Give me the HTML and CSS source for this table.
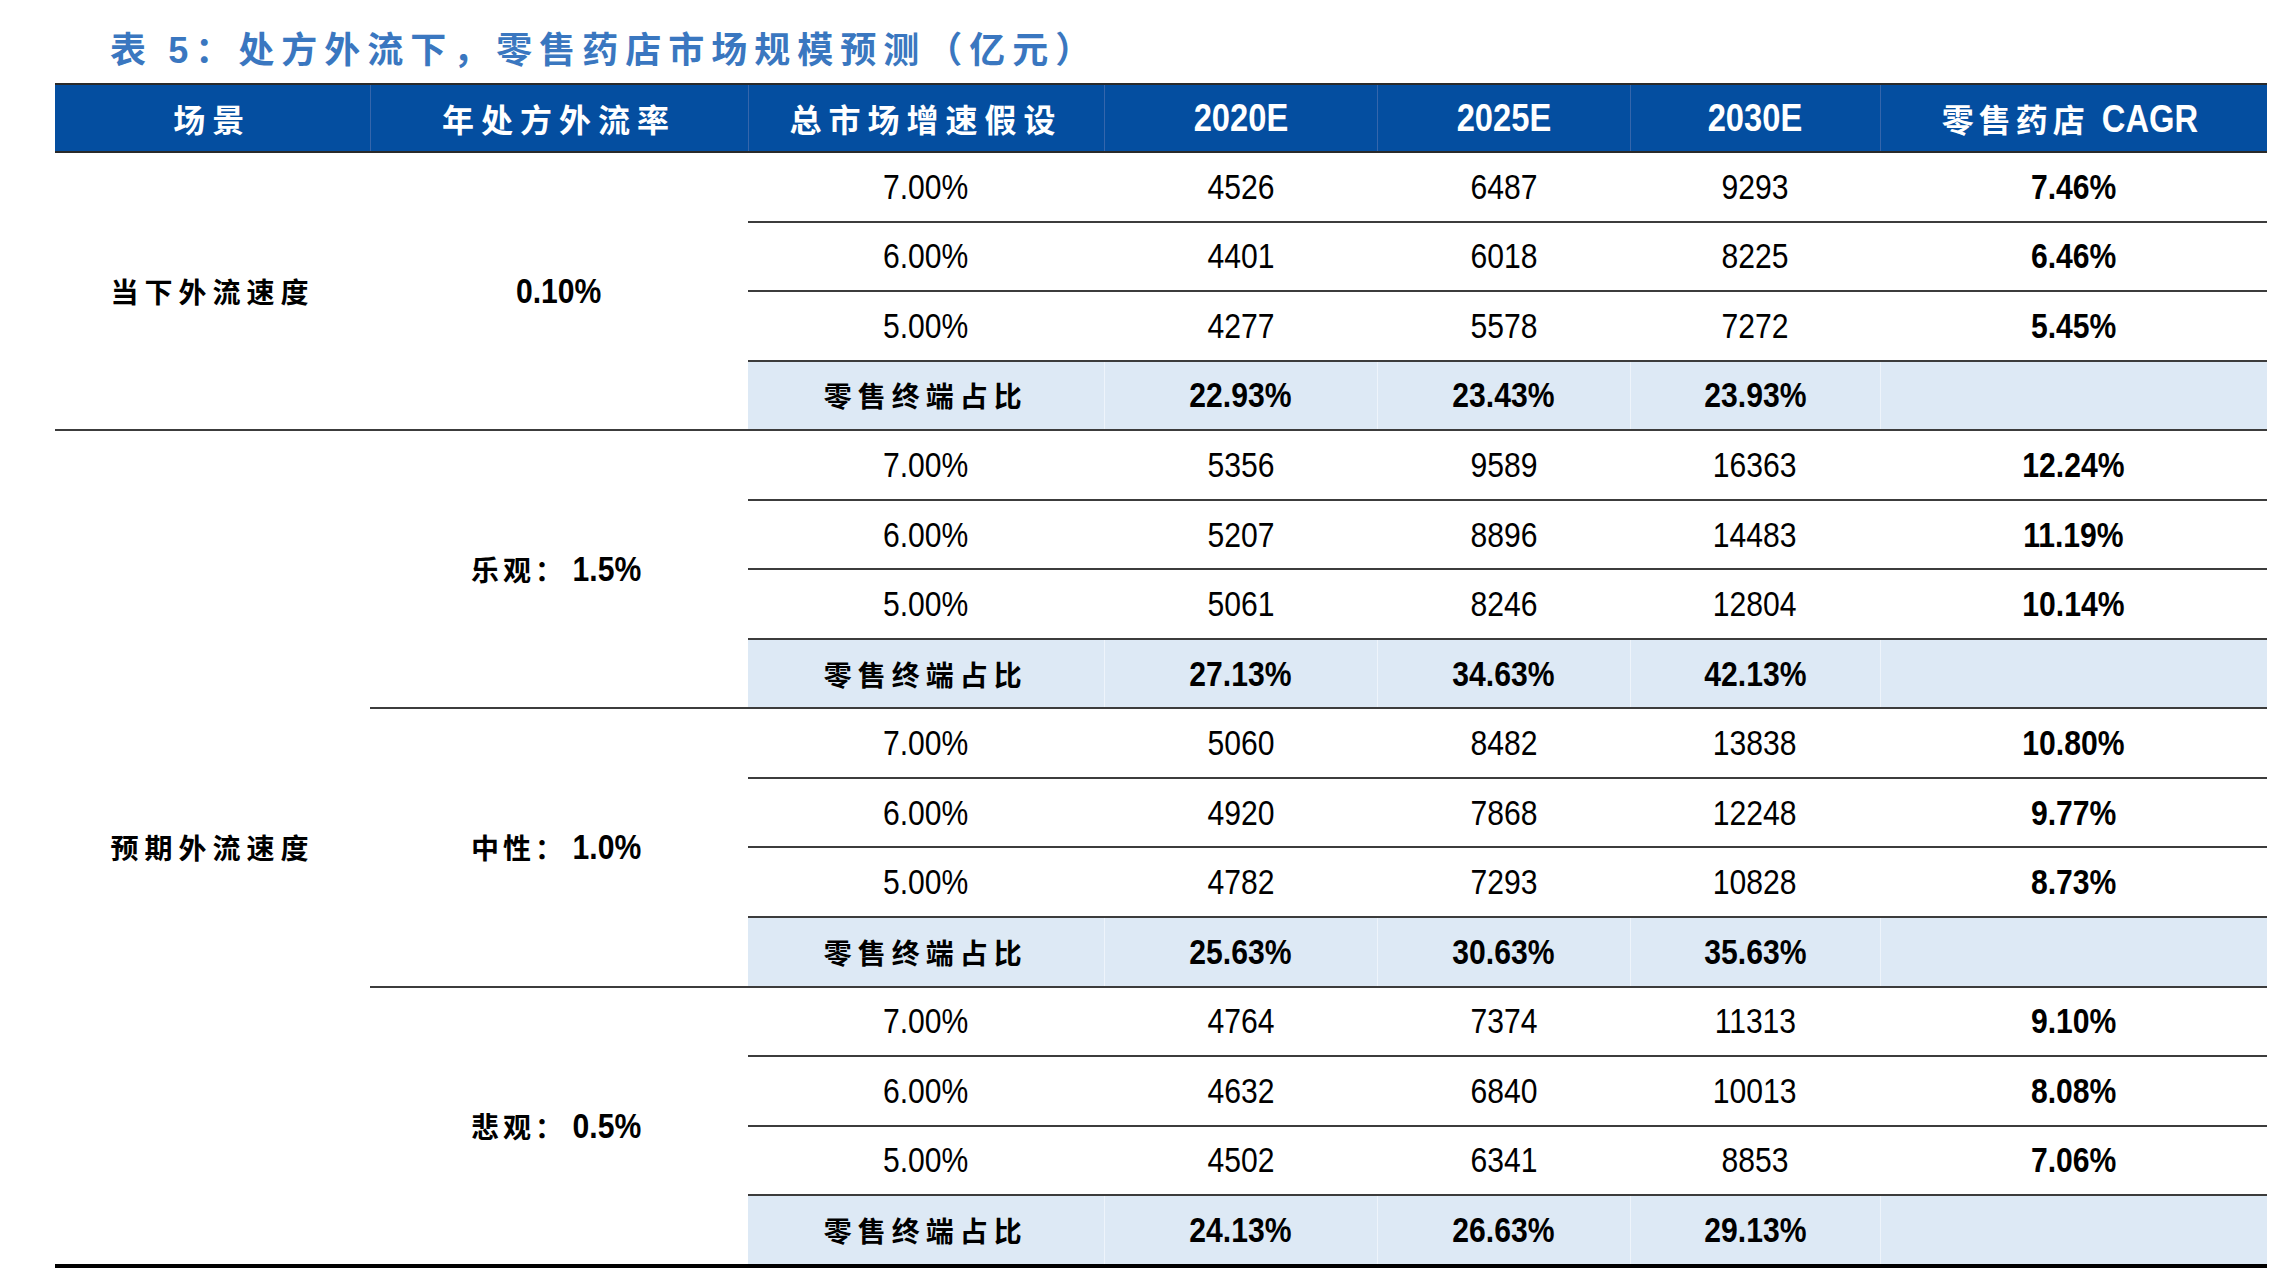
FILE: index.html
```html
<!DOCTYPE html>
<html lang="zh-CN">
<head>
<meta charset="utf-8">
<title>表5</title>
<link rel="stylesheet" href="styles.css">
</head>
<body>
<div class="title">表 <span class="tnum">5</span>：处方外流下，零售药店市场规模预测（亿元）</div>
<table class="tbl">
<colgroup>
<col class="c1"><col class="c2"><col class="c3"><col class="c4"><col class="c5"><col class="c6"><col class="c7">
</colgroup>
<thead>
<tr><th class="cjk">场景</th><th class="cjk">年处方外流率</th><th class="cjk">总市场增速假设</th><th><span class="d">2020E</span></th><th><span class="d">2025E</span></th><th><span class="d">2030E</span></th><th><span class="cjk tight">零售药店</span><span class="d">CAGR</span></th></tr>
</thead>
<tbody>
<tr><td rowspan="4" class="side cjk gend">当下外流速度</td><td rowspan="4" class="side b gend"><span class="d">0.10%</span></td><td><span class="d">7.00%</span></td><td><span class="d">4526</span></td><td><span class="d">6487</span></td><td><span class="d">9293</span></td><td class="b"><span class="d">7.46%</span></td></tr>
<tr><td><span class="d">6.00%</span></td><td><span class="d">4401</span></td><td><span class="d">6018</span></td><td><span class="d">8225</span></td><td class="b"><span class="d">6.46%</span></td></tr>
<tr><td><span class="d">5.00%</span></td><td><span class="d">4277</span></td><td><span class="d">5578</span></td><td><span class="d">7272</span></td><td class="b"><span class="d">5.45%</span></td></tr>
<tr class="hl"><td class="cjk">零售终端占比</td><td class="b"><span class="d">22.93%</span></td><td class="b"><span class="d">23.43%</span></td><td class="b"><span class="d">23.93%</span></td><td></td></tr>

<tr><td rowspan="12" class="side cjk last">预期外流速度</td><td rowspan="4" class="side mix gend">乐观：<span class="d">1.5%</span></td><td><span class="d">7.00%</span></td><td><span class="d">5356</span></td><td><span class="d">9589</span></td><td><span class="d">16363</span></td><td class="b"><span class="d">12.24%</span></td></tr>
<tr><td><span class="d">6.00%</span></td><td><span class="d">5207</span></td><td><span class="d">8896</span></td><td><span class="d">14483</span></td><td class="b"><span class="d">11.19%</span></td></tr>
<tr><td><span class="d">5.00%</span></td><td><span class="d">5061</span></td><td><span class="d">8246</span></td><td><span class="d">12804</span></td><td class="b"><span class="d">10.14%</span></td></tr>
<tr class="hl"><td class="cjk">零售终端占比</td><td class="b"><span class="d">27.13%</span></td><td class="b"><span class="d">34.63%</span></td><td class="b"><span class="d">42.13%</span></td><td></td></tr>

<tr><td rowspan="4" class="side mix gend">中性：<span class="d">1.0%</span></td><td><span class="d">7.00%</span></td><td><span class="d">5060</span></td><td><span class="d">8482</span></td><td><span class="d">13838</span></td><td class="b"><span class="d">10.80%</span></td></tr>
<tr><td><span class="d">6.00%</span></td><td><span class="d">4920</span></td><td><span class="d">7868</span></td><td><span class="d">12248</span></td><td class="b"><span class="d">9.77%</span></td></tr>
<tr><td><span class="d">5.00%</span></td><td><span class="d">4782</span></td><td><span class="d">7293</span></td><td><span class="d">10828</span></td><td class="b"><span class="d">8.73%</span></td></tr>
<tr class="hl"><td class="cjk">零售终端占比</td><td class="b"><span class="d">25.63%</span></td><td class="b"><span class="d">30.63%</span></td><td class="b"><span class="d">35.63%</span></td><td></td></tr>

<tr><td rowspan="4" class="side mix last">悲观：<span class="d">0.5%</span></td><td><span class="d">7.00%</span></td><td><span class="d">4764</span></td><td><span class="d">7374</span></td><td><span class="d">11313</span></td><td class="b"><span class="d">9.10%</span></td></tr>
<tr><td><span class="d">6.00%</span></td><td><span class="d">4632</span></td><td><span class="d">6840</span></td><td><span class="d">10013</span></td><td class="b"><span class="d">8.08%</span></td></tr>
<tr><td><span class="d">5.00%</span></td><td><span class="d">4502</span></td><td><span class="d">6341</span></td><td><span class="d">8853</span></td><td class="b"><span class="d">7.06%</span></td></tr>
<tr class="hl lastrow"><td class="cjk">零售终端占比</td><td class="b"><span class="d">24.13%</span></td><td class="b"><span class="d">26.63%</span></td><td class="b"><span class="d">29.13%</span></td><td></td></tr>
</tbody>
</table>
</body>
</html>
```
FILE: styles.css
```css
html, body {
  margin: 0;
  padding: 0;
  background: #ffffff;
}
body {
  width: 2290px;
  height: 1278px;
  overflow: hidden;
  font-family: "Liberation Sans", "Noto Sans CJK SC", sans-serif;
  color: #000;
}
.title {
  height: 83px;
  box-sizing: border-box;
  padding: 26px 0 0 110px;
  line-height: 42px;
  font-family: "Noto Sans CJK SC", sans-serif;
  font-weight: 700;
  font-size: 36px;
  letter-spacing: 7px;
  color: #3a77c0;
}
.title .tnum {
  font-family: "Liberation Sans", sans-serif;
  font-weight: 700;
}
.tbl {
  margin-left: 55px;
  width: 2212px;
  table-layout: fixed;
  border-collapse: collapse;
  border-spacing: 0;
}
.c1 { width: 315px; }
.c2 { width: 378px; }
.c3 { width: 356px; }
.c4 { width: 273px; }
.c5 { width: 253px; }
.c6 { width: 250px; }
.c7 { width: 387px; }

.d {
  display: inline-block;
  font-family: "Liberation Sans", sans-serif;
  transform: scaleX(0.86);
  transform-origin: center center;
  letter-spacing: 0;
}

.tbl th {
  height: 66px;
  padding: 0;
  background: #044ea0;
  color: #fff;
  border-top: 2px solid #2a2a2a;
  border-bottom: 2px solid #2a2a2a;
  border-left: 1px solid #3566ac;
  text-align: center;
  font-weight: 700;
  font-size: 38px;
  line-height: 44px;
}
.tbl th:first-child { border-left: none; }
.tbl th.cjk, .tbl th .cjk {
  font-family: "Noto Sans CJK SC", sans-serif;
  font-weight: 700;
  letter-spacing: 7px;
  font-size: 32px;
}
.tbl th .cjk.tight {
  letter-spacing: 5px;
  margin-right: 4px;
}
.tbl th .d {
  font-weight: 700;
  font-size: 38px;
}
.tbl td {
  height: 67.55px;
  padding: 0;
  text-align: center;
  vertical-align: middle;
  border-bottom: 2px solid #3c3c3c;
  font-size: 35px;
  line-height: 42px;
}
.tbl td.side {
  border-bottom: none;
}
.tbl td.side.gend {
  border-bottom: 2px solid #3c3c3c;
}
.tbl td.side.last {
  border-bottom: 4px solid #000;
}
.tbl td.cjk {
  font-family: "Noto Sans CJK SC", sans-serif;
  font-weight: 700;
  font-size: 28px;
  letter-spacing: 6px;
}
.tbl td.mix {
  font-family: "Noto Sans CJK SC", sans-serif;
  font-weight: 700;
  font-size: 28px;
  letter-spacing: 4px;
}
.tbl td.mix .d {
  font-weight: 700;
  font-size: 35px;
  letter-spacing: 0;
}
.tbl td.b {
  font-weight: 700;
}
.tbl tr.hl td {
  background: #dde9f5;
  border-left: 1px solid #eef4fb;
}
.tbl tr.hl td:first-child {
  border-left: none;
}
.tbl tr.lastrow td {
  border-bottom: 4px solid #000;
}
```
